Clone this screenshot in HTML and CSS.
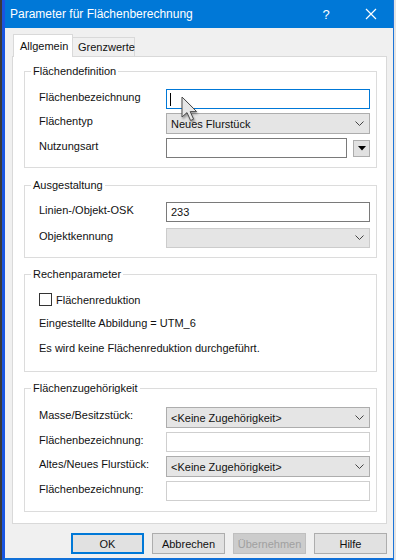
FILE: index.html
```html
<!DOCTYPE html>
<html>
	<head>
		<meta charset="UTF-8">
		<title>Parameter für Flächenberechnung</title>
		<link rel="stylesheet" href="styles.css">
	</head>
	<body>
		<div class="bildschirm">
			<div class="hintergrund"></div>
			<div class="fenster">
				<div class="titelleiste">
					<span class="titel">Parameter für Flächenberechnung</span>
					<span class="hilfeKnopf">?</span>
					<span class="schliessenKnopf">
						<svg width="12" height="12" viewBox="0 0 12 12"><path d="M1 1 L11 11 M11 1 L1 11" stroke="#fff" stroke-width="1.2" fill="none"/></svg>
					</span>
				</div>
				<div class="inhalt">
					<div class="reiter">
						<div class="reiterEintrag aktiv">Allgemein</div>
						<div class="reiterEintrag">Grenzwerte</div>
					</div>
					<div class="reiterSeite">
						<fieldset class="gruppe gruppeDefinition">
							<legend>Flächendefinition</legend>
							<div class="zeile">
								<span class="beschriftung">Flächenbezeichnung</span>
								<div class="feld fokus"><span class="schreibmarke"></span></div>
							</div>
							<div class="zeile">
								<span class="beschriftung">Flächentyp</span>
								<div class="auswahl">Neues Flurstück<svg class="pfeil" width="9" height="6" viewBox="0 0 9 6"><polyline points="0.5,0.5 4.5,4.5 8.5,0.5" stroke="#444" fill="none"/></svg></div>
							</div>
							<div class="zeile">
								<span class="beschriftung">Nutzungsart</span>
								<div class="kombi">
									<div class="feld schmal"></div>
									<div class="klappKnopf"><svg width="8" height="5" viewBox="0 0 8 5"><polygon points="0,0 8,0 4,4.5" fill="#000"/></svg></div>
								</div>
							</div>
						</fieldset>

						<fieldset class="gruppe gruppeAusgestaltung">
							<legend>Ausgestaltung</legend>
							<div class="zeile">
								<span class="beschriftung">Linien-/Objekt-OSK</span>
								<div class="feld">233</div>
							</div>
							<div class="zeile abstandGross">
								<span class="beschriftung">Objektkennung</span>
								<div class="auswahl gesperrt"><svg class="pfeil" width="9" height="6" viewBox="0 0 9 6"><polyline points="0.5,0.5 4.5,4.5 8.5,0.5" stroke="#444" fill="none"/></svg></div>
							</div>
						</fieldset>

						<fieldset class="gruppe gruppeRechnen">
							<legend>Rechenparameter</legend>
							<div class="kontrolle">
								<span class="kaestchen"></span>
								<span>Flächenreduktion</span>
							</div>
							<div class="hinweis">Eingestellte Abbildung = UTM_6</div>
							<div class="hinweis zweite">Es wird keine Flächenreduktion durchgeführt.</div>
						</fieldset>

						<fieldset class="gruppe gruppeZugehoerigkeit">
							<legend>Flächenzugehörigkeit</legend>
							<div class="zeile">
								<span class="beschriftung">Masse/Besitzstück:</span>
								<div class="auswahl">&lt;Keine Zugehörigkeit&gt;<svg class="pfeil" width="9" height="6" viewBox="0 0 9 6"><polyline points="0.5,0.5 4.5,4.5 8.5,0.5" stroke="#444" fill="none"/></svg></div>
							</div>
							<div class="zeile">
								<span class="beschriftung">Flächenbezeichnung:</span>
								<div class="feld hell"></div>
							</div>
							<div class="zeile">
								<span class="beschriftung">Altes/Neues Flurstück:</span>
								<div class="auswahl">&lt;Keine Zugehörigkeit&gt;<svg class="pfeil" width="9" height="6" viewBox="0 0 9 6"><polyline points="0.5,0.5 4.5,4.5 8.5,0.5" stroke="#444" fill="none"/></svg></div>
							</div>
							<div class="zeile">
								<span class="beschriftung">Flächenbezeichnung:</span>
								<div class="feld hell"></div>
							</div>
						</fieldset>
					</div>
					<div class="knopfleiste">
						<div class="knopf standard">OK</div>
						<div class="knopf">Abbrechen</div>
						<div class="knopf inaktiv">Übernehmen</div>
						<div class="knopf">Hilfe</div>
					</div>
				</div>
			</div>
		</div>
		<svg class="mauszeiger" width="20" height="28" viewBox="0 0 20 28">
			<path d="M2 1 L2 21 L7 16.6 L10.6 24.5 L13.6 23.2 L10.2 15.6 L16.6 15.6 Z" fill="#e6e6e6" stroke="#4a4a4a" stroke-width="1" stroke-linejoin="round"/>
		</svg>
	</body>
</html>
```

FILE: styles.css
```css
body {
	margin: 0;
	background: #e4e4e4;
	font-family: "Liberation Sans", Arial, sans-serif;
	font-size: 11px;
	color: #111;
}
.bildschirm {
	display: flex;
	width: 396px;
	height: 560px;
}
.hintergrund {
	width: 2px;
	background: #3a3a3a;
}
.fenster {
	box-sizing: border-box;
	width: 392px;
	height: 560px;
	border-left: 3px solid #1a55e0;
	border-right: 1px solid #1c74d8;
	border-bottom: 2px solid #1070d8;
	display: flex;
	flex-direction: column;
	background: #f0f0f0;
}
.titelleiste {
	height: 28px;
	background: #0078d7;
	color: #fff;
	display: flex;
	align-items: center;
}
.titel {
	font-size: 12px;
	padding-left: 5px;
	flex: 1;
}
.hilfeKnopf {
	font-size: 13px;
	width: 24px;
	margin-right: 22px;
	text-align: center;
}
.schliessenKnopf {
	width: 22px;
	margin-right: 11px;
	display: flex;
	justify-content: center;
}
.inhalt {
	flex: 1;
	padding: 6px 6px 0 7px;
}
.reiter {
	display: flex;
	align-items: flex-end;
	padding-left: 1px;
}
.reiterEintrag {
	box-sizing: border-box;
	height: 19px;
	width: 63px;
	border: 1px solid #d9d9d9;
	border-bottom: none;
	margin-left: -1px;
	padding-top: 3px;
	padding-left: 5px;
	background: #f0f0f0;
}
.reiterEintrag.aktiv {
	height: 23px;
	width: 60px;
	margin-left: 0;
	margin-bottom: -1px;
	padding-top: 5px;
	padding-left: 6px;
	background: #fff;
	position: relative;
	z-index: 1;
}
.reiterSeite {
	border: 1px solid #d9d9d9;
	background: #fff;
	padding: 8px 9px 11px 11px;
}
.gruppe {
	margin: 0;
	border: 1px solid #dcdcdc;
	padding: 11px 6px 9px 14px;
	min-width: 0;
}
.gruppe legend {
	line-height: 13px;
	padding: 0 2px;
	margin-left: -8px;
}
.gruppeAusgestaltung {
	margin-top: 11px;
	padding-top: 10px;
}
.gruppeRechnen {
	margin-top: 10px;
	padding-top: 12px;
	padding-bottom: 16px;
}
.gruppeZugehoerigkeit {
	margin-top: 10px;
	padding-top: 12px;
	padding-bottom: 10px;
}
.zeile {
	display: flex;
	align-items: center;
	margin-top: 4px;
}
.zeile:first-of-type {
	margin-top: 0;
}
.zeile.abstandGross {
	margin-top: 6px;
}
.beschriftung {
	width: 127px;
	padding-bottom: 5px;
}
.feld {
	box-sizing: border-box;
	width: 204px;
	height: 20px;
	border: 1px solid #7a7a7a;
	background: #fff;
	padding-left: 4px;
	line-height: 18px;
	display: flex;
	align-items: center;
}
.feld.fokus {
	border-color: #0078d7;
}
.feld.hell {
	border-color: #cfcfcf;
}
.feld.schmal {
	width: 181px;
}
.schreibmarke {
	width: 1px;
	height: 13px;
	background: #000;
	margin-left: -1px;
}
.auswahl {
	box-sizing: border-box;
	width: 204px;
	height: 21px;
	border: 1px solid #adadad;
	background: #e5e5e5;
	padding-left: 4px;
	display: flex;
	align-items: center;
}
.auswahl.gesperrt {
	border-color: #cccccc;
	height: 20px;
}
.pfeil {
	margin-left: auto;
	margin-right: 5px;
}
.kombi {
	display: flex;
	align-items: center;
	width: 204px;
	justify-content: space-between;
}
.klappKnopf {
	box-sizing: border-box;
	width: 17px;
	height: 17px;
	border: 1px solid #adadad;
	background: #e1e1e1;
	display: flex;
	align-items: center;
	justify-content: center;
}
.kontrolle {
	display: flex;
	align-items: center;
	height: 13px;
}
.kaestchen {
	box-sizing: border-box;
	width: 13px;
	height: 13px;
	border: 1px solid #333;
	background: #fff;
	margin-right: 4px;
}
.hinweis {
	line-height: 13px;
	margin-top: 11px;
}
.hinweis.zweite {
	margin-top: 12px;
}
.knopfleiste {
	display: flex;
	justify-content: flex-end;
	gap: 8px;
	margin-top: 9px;
}
.knopf {
	box-sizing: border-box;
	width: 73px;
	height: 21px;
	border: 1px solid #adadad;
	background: #e1e1e1;
	display: flex;
	align-items: center;
	justify-content: center;
}
.knopf.standard {
	border: 2px solid #0078d7;
}
.knopf.inaktiv {
	background: #cccccc;
	border-color: #bfbfbf;
	color: #a0a0a0;
}
.mauszeiger {
	position: absolute;
	left: 180px;
	top: 96px;
	filter: drop-shadow(1px 2px 1px rgba(0, 0, 0, 0.35));
}
```
